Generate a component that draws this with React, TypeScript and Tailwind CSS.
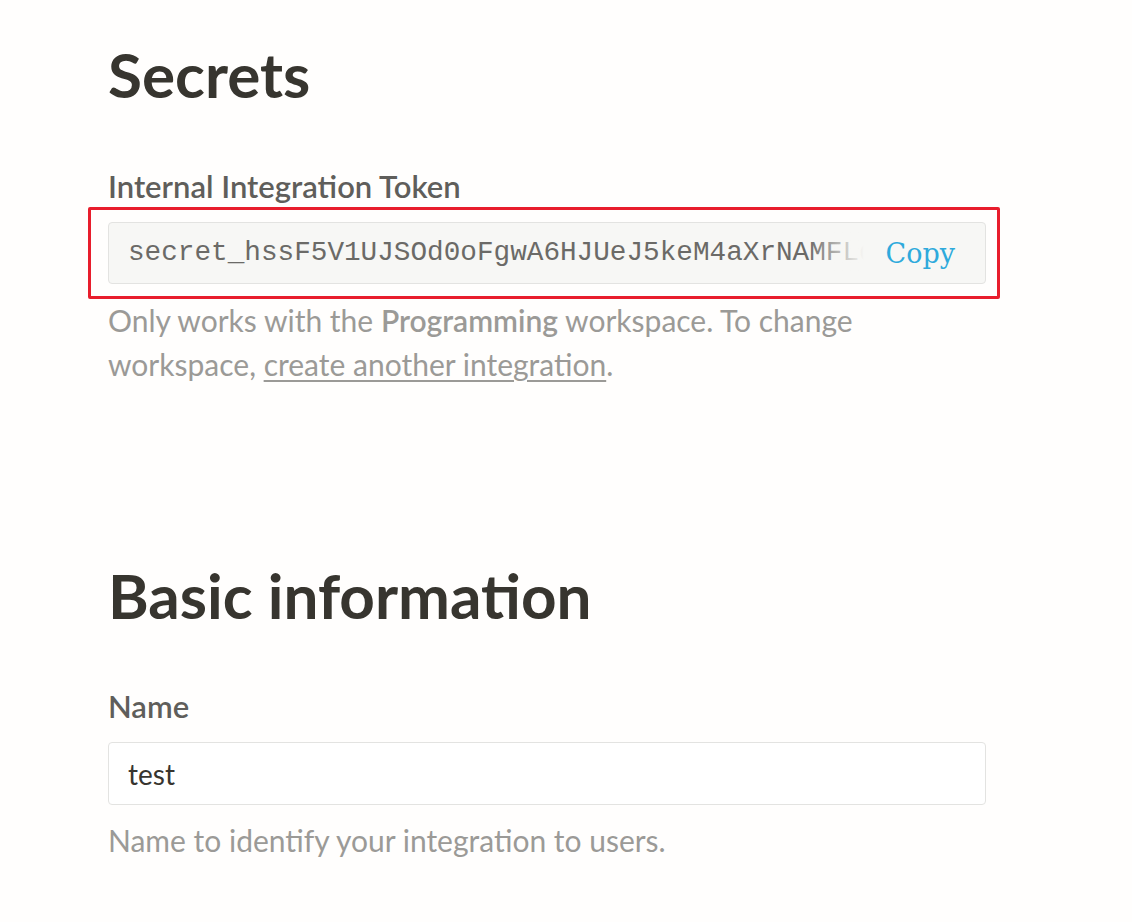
import React from "react";

const sans = { fontFamily: 'Lato, "Noto Sans", sans-serif' };

const Label = ({ children }: { children: React.ReactNode }) => (
  <div className="text-[31px] leading-[34px] font-semibold text-[#5f5e5b]">{children}</div>
);

const Help = ({ children }: { children: React.ReactNode }) => (
  <div className="text-[30px] leading-[44px] text-[#9b9a97]">{children}</div>
);

const App = () => {
  return (
    <div
      className="min-h-[922px] w-full bg-[#fffefd] text-[#37352f] pl-[108px] pr-[146px] pt-[37px]"
      style={sans}
    >
      <h1 className="text-[62px] leading-[74px] font-bold">Secrets</h1>

      <div className="mt-[58px]">
        <Label>Internal Integration Token</Label>
        {/* red annotation round the token field */}
        <div className="relative mt-[19px]">
          <div className="absolute -left-[20px] -right-[14px] -top-[15px] -bottom-[15px] border-[3px] border-[#e81d2c] rounded-[2px] pointer-events-none" />
          <div className="flex items-center h-[62px] rounded-[4px] border border-[#e3e3e1] bg-[#f7f7f5] pl-[19px] pr-[30px]">
            <div className="relative flex-1 overflow-hidden whitespace-nowrap">
              <span
                className="text-[27.7px] text-[#6b6a67]"
                style={{ fontFamily: '"Liberation Mono", monospace' }}
              >
                secret_hssF5V1UJSOd0oFgwA6HJUeJ5keM4aXrNAMFLq
              </span>
              <div className="absolute right-0 top-0 bottom-0 w-[56px] bg-gradient-to-r from-[#f7f7f5]/0 to-[#f7f7f5]" />
            </div>
            <button
              className="ml-[22px] text-[27px] leading-none text-[#2eaadc]"
              style={{ fontFamily: '"DejaVu Serif", serif' }}
            >
              Copy
            </button>
          </div>
        </div>
        <div className="mt-[14px]">
          <Help>
            Only works with the <span className="font-semibold">Programming</span> workspace. To change workspace,{" "}
            <a className="underline underline-offset-[4px] decoration-[2px]">create another integration</a>.
          </Help>
        </div>
      </div>

      <h1 className="mt-[172px] text-[62px] leading-[74px] font-bold">Basic information</h1>

      <div className="mt-[57px]">
        <Label>Name</Label>
        <div className="mt-[19px] flex items-center h-[63px] rounded-[4px] border border-[#e3e3e1] bg-white px-[19px]">
          <span className="text-[28px] text-[#37352f]">test</span>
        </div>
        <div className="mt-[13px]">
          <Help>Name to identify your integration to users.</Help>
        </div>
      </div>
    </div>
  );
};

export default App;
